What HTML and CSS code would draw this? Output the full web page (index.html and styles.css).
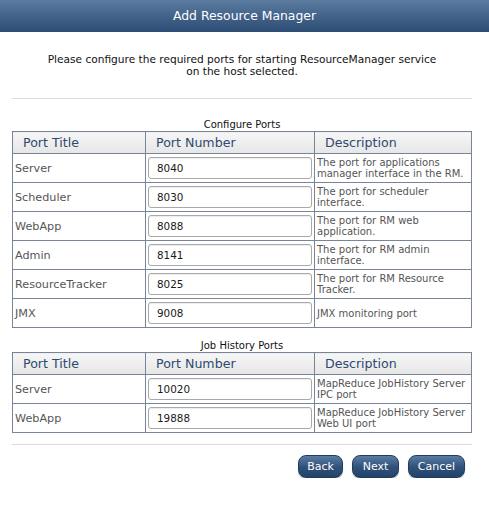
FILE: index.html
```html
<!DOCTYPE html>
<html>
<head>
<meta charset="utf-8">
<link rel="stylesheet" href="styles.css">
</head>
<body>
<div class="titlebar">Add Resource Manager</div>
<div class="content">
  <p class="intro">Please configure the required ports for starting ResourceManager service<br>on the host selected.</p>
  <div class="rule"></div>
  <div class="caption">Configure Ports</div>
  <table class="ports">
    <thead>
      <tr><th class="c1">Port Title</th><th class="c2">Port Number</th><th class="c3">Description</th></tr>
    </thead>
    <tbody>
      <tr><td class="name">Server</td><td class="num"><input type="text" value="8040"></td><td class="desc">The port for applications manager interface in the RM.</td></tr>
      <tr><td class="name">Scheduler</td><td class="num"><input type="text" value="8030"></td><td class="desc">The port for scheduler interface.</td></tr>
      <tr><td class="name">WebApp</td><td class="num"><input type="text" value="8088"></td><td class="desc">The port for RM web application.</td></tr>
      <tr><td class="name">Admin</td><td class="num"><input type="text" value="8141"></td><td class="desc">The port for RM admin interface.</td></tr>
      <tr><td class="name">ResourceTracker</td><td class="num"><input type="text" value="8025"></td><td class="desc">The port for RM Resource Tracker.</td></tr>
      <tr><td class="name">JMX</td><td class="num"><input type="text" value="9008"></td><td class="desc">JMX monitoring port</td></tr>
    </tbody>
  </table>
  <div class="caption second">Job History Ports</div>
  <table class="ports">
    <thead>
      <tr><th class="c1">Port Title</th><th class="c2">Port Number</th><th class="c3">Description</th></tr>
    </thead>
    <tbody>
      <tr><td class="name">Server</td><td class="num"><input type="text" value="10020"></td><td class="desc">MapReduce JobHistory Server IPC port</td></tr>
      <tr><td class="name">WebApp</td><td class="num"><input type="text" value="19888"></td><td class="desc">MapReduce JobHistory Server Web UI port</td></tr>
    </tbody>
  </table>
  <div class="rule bottom"></div>
  <div class="actions">
    <button class="btn back">Back</button>
    <button class="btn next">Next</button>
    <button class="btn cancel">Cancel</button>
  </div>
</div>
</body>
</html>
```
FILE: styles.css
```css
html, body {
  margin: 0;
  padding: 0;
  background: #ffffff;
}
body {
  font-family: "DejaVu Sans", "Liberation Sans", sans-serif;
  font-size: 10px;
  color: #000;
}
.titlebar {
  height: 32px;
  line-height: 32px;
  text-align: center;
  color: #ffffff;
  font-size: 12.4px;
  background: linear-gradient(to bottom, #5b7ba1 0%, #2c4c74 100%);
}
.content {
  width: 460px;
  margin-left: 12px;
}
.intro {
  margin: 21px 0 0 0;
  line-height: 12px;
  text-align: center;
  font-size: 10.6px;
  color: #111;
}
.rule {
  height: 1px;
  background: #dcdcdc;
  margin-top: 21px;
}
.caption {
  margin-top: 20px;
  line-height: 12px;
  text-align: center;
  font-size: 10px;
  color: #111;
}
.caption.second {
  margin-top: 12px;
}
.ports {
  width: 460px;
  border-collapse: collapse;
  table-layout: fixed;
}
.ports th, .ports td {
  border: 1px solid #788497;
  padding: 0;
}
.ports th {
  height: 21px;
  text-align: left;
  font-weight: normal;
  font-size: 12.6px;
  color: #2d4a6f;
  padding-left: 10px;
  background: linear-gradient(to bottom, #f6f6f6 0%, #e6e6e6 100%);
}
.ports .c1 { width: 122px; }
.ports .c2 { width: 158px; }
.ports td {
  height: 28px;
  font-size: 10px;
  color: #555;
  padding-left: 2px;
  line-height: 11px;
  vertical-align: middle;
}
.ports td.name {
  font-size: 11.2px;
}
.ports td.num {
  padding: 0 2px 0 2px;
}
.ports td.desc {
  padding-left: 2px;
  padding-right: 1px;
}
.ports input {
  box-sizing: border-box;
  display: block;
  width: 164px;
  height: 22px;
  margin: 0;
  padding: 0 0 0 8px;
  border: 1px solid #a9a9a9;
  border-radius: 3px;
  box-shadow: inset 0 1px 1px rgba(0,0,0,0.08);
  font-family: "DejaVu Sans", "Liberation Sans", sans-serif;
  font-size: 10.4px;
  color: #1a1a1a;
  background: #fff;
}
.rule.bottom {
  margin-top: 11px;
}
.actions {
  display: flex;
  justify-content: flex-end;
  gap: 9px;
  margin-top: 10px;
  padding-right: 7px;
}
.btn {
  height: 23px;
  padding: 0;
  border: 1px solid #1f3c60;
  border-radius: 8px;
  color: #fff;
  font-family: "DejaVu Sans", "Liberation Sans", sans-serif;
  font-size: 11px;
  background: linear-gradient(to bottom, #5a7ca3 0%, #2e5079 55%, #244369 100%);
  box-shadow: 0 1px 1px rgba(0,0,0,0.25);
}
.btn.back { width: 45px; }
.btn.next { width: 47px; }
.btn.cancel { width: 57px; }
```
